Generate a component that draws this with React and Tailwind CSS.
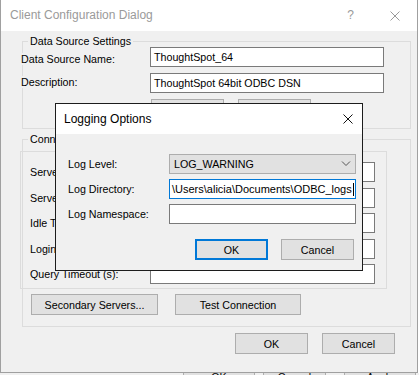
import React from "react";

const font = "font-['Liberation_Sans',Arial,sans-serif]";

function Btn({ className = "", children }) {
  return (
    <div
      className={`flex items-center justify-center bg-[#e1e1e1] border border-[#adadad] text-black ${className}`}
    >
      {children}
    </div>
  );
}

function XIcon({ color, className = "" }) {
  return (
    <svg width="10" height="10" viewBox="0 0 10 10" className={className}>
      <path d="M0.5 0.5 L9.5 9.5 M9.5 0.5 L0.5 9.5" stroke={color} strokeWidth="1" fill="none" />
    </svg>
  );
}

function Field({ w, children, className = "" }) {
  return (
    <div
      className={`h-[20px] bg-white border border-[#7a7a7a] flex items-center pl-[3px] overflow-hidden whitespace-nowrap ${w} ${className}`}
    >
      {children}
    </div>
  );
}

export default function App() {
  return (
    <div
      className={`relative w-[419px] h-[375px] overflow-hidden bg-white ${font} text-[10.7px] leading-[12px] text-black`}
    >
      <div className="flex">
        {/* Main window */}
        <div className="w-[418px] h-[373px] shrink-0 flex flex-col bg-[#f0f0f0] border-x border-b border-[#a0a0a0]">
          <div className="h-[31px] shrink-0 bg-white flex items-center pl-[9px] text-[12px] leading-[15px] text-[#9a9a9a]">
            <span className="flex-1">Client Configuration Dialog</span>
            <span className="w-[7px] text-center mr-[36px]">?</span>
            <XIcon color="#9a9a9a" className="mr-[17px]" />
          </div>

          <div className="flex-1 flex flex-col pl-[21px]">
            {/* Data Source Settings */}
            <fieldset className="mt-[4px] w-[389px] h-[94px] border border-[#dcdcdc]">
              <legend className="ml-[5px] px-[2px] leading-[12px]">Data Source Settings</legend>
              <div className="flex -ml-[2px]">
                <div className="w-[129px] pt-[6px]">
                  <span className="relative bg-[#f0f0f0]">Data Source Name:</span>
                </div>
                <Field w="w-[234px]">ThoughtSpot_64</Field>
              </div>
              <div className="flex -ml-[2px] mt-[6px]">
                <div className="w-[129px] pt-[3px]">
                  <span className="relative bg-[#f0f0f0]">Description:</span>
                </div>
                <Field w="w-[234px]">ThoughtSpot 64bit ODBC DSN</Field>
              </div>
              <div className="flex ml-[128px] mt-[6px] gap-[14px]">
                <Btn className="w-[73px] h-[21px]">Advanced...</Btn>
                <Btn className="w-[73px] h-[21px]">Logging...</Btn>
              </div>
            </fieldset>

            {/* Connection Settings */}
            <fieldset className="mt-[4px] w-[389px] h-[194px] border border-[#dcdcdc]">
              <legend className="ml-[5px] px-[2px] leading-[12px]">Connection Settings</legend>
              <div className="mt-[6px] -ml-[3px] w-[367px] h-[138px] border border-[#dcdcdc] pl-[9px] pt-[10px] flex flex-col">
                <div className="flex items-center h-[20px]">
                  <span className="w-[120px]">Server:</span>
                  <Field w="w-[225px]" />
                </div>
                <div className="flex items-center h-[20px] mt-[6px]">
                  <span className="w-[120px]">Server Port:</span>
                  <Field w="w-[225px]" />
                </div>
                <div className="flex items-center h-[20px] mt-[5px]">
                  <span className="w-[120px]">Idle Timeout (s):</span>
                  <Field w="w-[225px]" />
                </div>
                <div className="flex items-center h-[20px] mt-[6px]">
                  <span className="w-[120px]">Login Timeout (s):</span>
                  <Field w="w-[225px]" />
                </div>
                <div className="flex items-center h-[20px] mt-[5px]">
                  <span className="w-[120px]">Query Timeout (s):</span>
                  <Field w="w-[225px]" />
                </div>
              </div>
              <div className="flex ml-[8px] mt-[5px] gap-[17px]">
                <Btn className="w-[127px] h-[21px]">Secondary Servers...</Btn>
                <Btn className="w-[126px] h-[21px]">Test Connection</Btn>
              </div>
            </fieldset>

            <div className="flex justify-end pr-[22px] mt-[6px] gap-[14px]">
              <Btn className="w-[73px] h-[21px]">OK</Btn>
              <Btn className="w-[73px] h-[21px]">Cancel</Btn>
            </div>
          </div>
        </div>
        <div className="w-[1px] h-[373px] bg-white" />
      </div>

      {/* Window behind, bottom edge */}
      <div className="h-[2px] overflow-hidden bg-[#f0f0f0]">
        <div className="flex -mt-[7px] pl-[183px]">
          <Btn className="w-[72px] h-[21px]">OK</Btn>
          <Btn className="w-[63px] h-[21px] ml-[8px]">Cancel</Btn>
          <Btn className="w-[72px] h-[21px] ml-[18px]">Apply</Btn>
        </div>
      </div>

      {/* Logging Options dialog (overlay window) */}
      <div className="absolute left-[55px] top-[103px] w-[308px] h-[168px] border border-[#1c1c1c] bg-[#f0f0f0] flex flex-col">
        <div className="h-[30px] shrink-0 bg-white flex items-center pl-[8px] text-[12px] leading-[15px]">
          <span className="flex-1">Logging Options</span>
          <XIcon color="#111" className="mr-[9px]" />
        </div>
        <div className="flex flex-col pl-[12px] pt-[20px]">
          <div className="flex items-center h-[20px]">
            <span className="w-[101px]">Log Level:</span>
            <div className="w-[187px] h-[20px] bg-[#e1e1e1] border border-[#adadad] flex items-center pl-[4px] pr-[4px]">
              <span className="flex-1">LOG_WARNING</span>
              <svg width="10" height="6" viewBox="0 0 10 6">
                <path d="M1 0.5 L5 4.5 L9 0.5" stroke="#555" strokeWidth="1" fill="none" />
              </svg>
            </div>
          </div>
          <div className="flex items-center h-[20px] mt-[5px]">
            <span className="w-[101px]">Log Directory:</span>
            <div className="w-[187px] h-[20px] bg-white border border-[#0078d7] flex items-center pl-[2px] overflow-hidden whitespace-nowrap text-[11px]">
              <span>\Users\alicia\Documents\ODBC_logs</span>
              <span className="w-[1px] h-[13px] bg-black ml-[1px] shrink-0" />
            </div>
          </div>
          <div className="flex items-center h-[20px] mt-[5px]">
            <span className="w-[101px]">Log Namespace:</span>
            <Field w="w-[187px]" />
          </div>
          <div className="flex justify-end pr-[8px] mt-[15px] gap-[13px]">
            <div className="w-[73px] h-[21px] flex items-center justify-center bg-[#e1e1e1] border-2 border-[#0078d7]">
              OK
            </div>
            <Btn className="w-[73px] h-[21px]">Cancel</Btn>
          </div>
        </div>
      </div>
    </div>
  );
}
